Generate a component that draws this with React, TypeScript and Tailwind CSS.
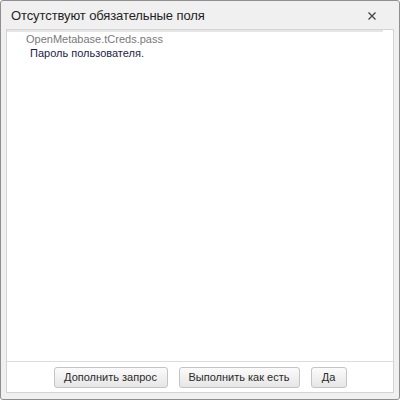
const buttons = [
  { label: "Дополнить запрос", width: "w-[114px]" },
  { label: "Выполнить как есть", width: "w-[121px]" },
  { label: "Да", width: "w-[36px]" },
];

export default function App() {
  return (
    <div
      className="w-[400px] h-[400px] flex flex-col bg-[#f0f0f0] border border-[#8f8f8f] rounded-[3px] overflow-hidden"
      style={{ fontFamily: '"Liberation Sans", Arial, sans-serif' }}
    >
      {/* title bar */}
      <div className="h-[28px] flex items-center justify-between pl-[10px] pr-[23px] shrink-0">
        <span className="text-[13px] tracking-[-0.1px] leading-none text-[#1f1f1f] pt-[1px]">
          Отсутствуют обязательные поля
        </span>
        <svg width="8" height="8" viewBox="0 0 8 8" className="mt-[2px]">
          <path d="M0.5 0.5 L7.5 7.5 M7.5 0.5 L0.5 7.5" stroke="#444" strokeWidth="1.3" />
        </svg>
      </div>

      {/* body */}
      <div className="flex-1 flex flex-col px-[5px] pb-[6px]">
        <div className="flex-1 flex flex-col bg-white border border-[#d4d4d4]">
          <div className="flex-1 flex flex-col">
            <div className="h-[2px] bg-[#e6e6e6] mr-[10px]" />
            <div className="pl-[19px] text-[11px] leading-[14px]">
              <div className="text-[#7a7a7a]">OpenMetabase.tCreds.pass</div>
              <div className="text-[#1c1c4a] pl-[4px]">Пароль пользователя.</div>
            </div>
          </div>
          <div className="h-[31px] shrink-0 border-t border-[#dcdcdc] flex items-start justify-center gap-[11px] pt-[5px]">
            {buttons.map((b) => (
              <button
                key={b.label}
                className={`${b.width} h-[21px] text-[11px] leading-none text-[#2a2a2a] border border-[#c4c4c4] rounded-[3px] bg-gradient-to-b from-[#fbfbfb] to-[#e6e6e6]`}
              >
                {b.label}
              </button>
            ))}
          </div>
        </div>
      </div>
    </div>
  );
}
